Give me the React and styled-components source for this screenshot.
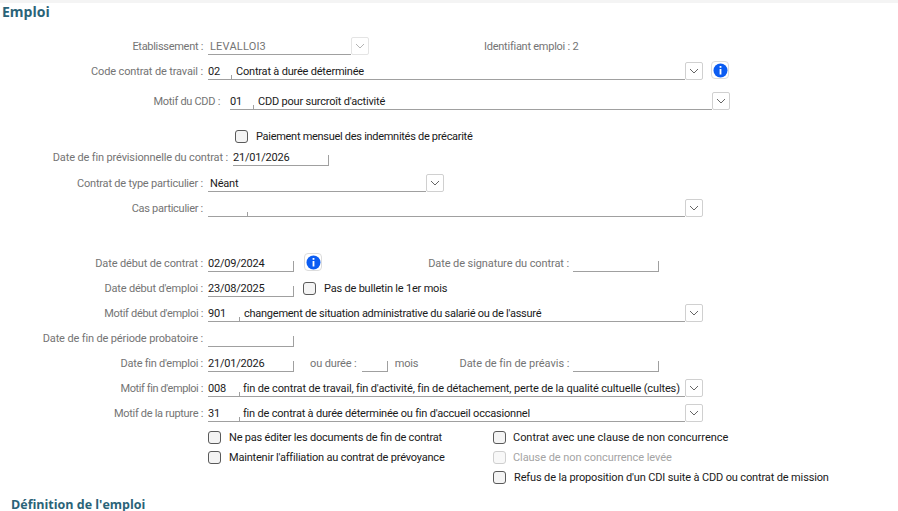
import styled, { createGlobalStyle } from 'styled-components'

const GlobalStyle = createGlobalStyle`
  html, body {
    margin: 0;
    padding: 0;
    background: #fff;
  }
`

const Page = styled.div`
  width: 898px;
  height: 511px;
  overflow: hidden;
  box-sizing: border-box;
  border-top: 3px solid #f4f4f4;
  font-family: Roboto, 'Liberation Sans', sans-serif;
  font-size: 11px;
  letter-spacing: -0.2px;
  color: #1a1a1a;
`

const SectionTitle = styled.h2`
  margin: ${(props) => props.$top || 0}px 0 0 ${(props) => props.$left || 0}px;
  height: 18px;
  line-height: 18px;
  font-family: 'Open Sans', sans-serif;
  font-size: ${(props) => props.$size}px;
  font-weight: 700;
  letter-spacing: 0;
  color: #2a6378;
`

const Row = styled.div`
  display: flex;
  align-items: flex-end;
  height: 18px;
  margin-top: ${(props) => props.$top || 0}px;
`

const Label = styled.label`
  flex: none;
  width: ${(props) => props.$w || 203}px;
  margin-right: ${(props) => props.$gap ?? 5}px;
  height: 18px;
  line-height: 20px;
  text-align: right;
  white-space: nowrap;
  letter-spacing: ${(props) => props.$ls ?? -0.14}px;
  color: #747474;
`

const Field = styled.div`
  display: flex;
  align-items: flex-end;
  flex: none;
  box-sizing: border-box;
  width: ${(props) => props.$w}px;
  height: 18px;
  margin-left: ${(props) => props.$left || 0}px;
  border-bottom: 1px solid #a0a0a0;
`

const Code = styled.span`
  flex: none;
  width: ${(props) => props.$w}px;
  height: 17px;
  line-height: 19px;
  white-space: nowrap;
`

const Value = styled.span`
  flex: 1;
  height: 17px;
  line-height: 19px;
  padding-left: ${(props) => props.$pad ?? 4}px;
  white-space: nowrap;
  letter-spacing: ${(props) => props.$ls ?? -0.2}px;
  color: ${(props) => (props.$muted ? '#747474' : '#1a1a1a')};
`

const Tick = styled.i`
  flex: none;
  width: 1px;
  height: ${(props) => props.$h || 4}px;
  background: #a0a0a0;
`

const DropButton = styled.button`
  flex: none;
  box-sizing: border-box;
  display: flex;
  align-items: center;
  justify-content: center;
  width: 18px;
  height: 18px;
  padding: 0;
  background: #fff;
  border: 1px solid ${(props) => (props.disabled ? '#e4e4e4' : '#d0d0d0')};
  border-radius: 2px;
  color: ${(props) => (props.disabled ? '#b4b4b4' : '#666')};
`

const InfoButton = styled.button`
  flex: none;
  box-sizing: border-box;
  display: flex;
  align-items: center;
  justify-content: center;
  width: 18px;
  height: 18px;
  margin-left: ${(props) => props.$left}px;
  margin-bottom: 1px;
  padding: 0;
  background: #fff;
  border: 1px solid #dcdcdc;
  border-radius: 4px;
`

const Text = styled.span`
  flex: none;
  height: 18px;
  line-height: 20px;
  margin-left: ${(props) => props.$left || 0}px;
  white-space: nowrap;
  letter-spacing: ${(props) => props.$ls ?? -0.14}px;
  color: #747474;
`

const CheckLine = styled.div`
  display: flex;
  align-items: center;
  gap: ${(props) => props.$gap || 8}px;
  height: ${(props) => props.$h || 20}px;
  margin-left: ${(props) => props.$left || 0}px;
  margin-top: ${(props) => props.$top || 0}px;
  white-space: nowrap;
  letter-spacing: ${(props) => props.$ls ?? -0.2}px;
  color: ${(props) => (props.$disabled ? '#a4a4a4' : '#1a1a1a')};
`

const Box = styled.span`
  flex: none;
  box-sizing: border-box;
  width: 13px;
  height: 13px;
  background: ${(props) => (props.$disabled ? '#f8f8f8' : '#f4f4f4')};
  border: 1px solid ${(props) => (props.$disabled ? '#cfcfcf' : '#5a5a5a')};
  border-radius: 3px;
`

const CheckGrid = styled.div`
  display: grid;
  grid-template-columns: 285px auto;
  margin: 5px 0 0 208px;
`

const CheckColumn = styled.div`
  display: flex;
  flex-direction: column;
`

const Chevron = () => (
  <svg width="10" height="6" viewBox="0 0 10 6">
    <polyline points="1,1 5,5 9,1" fill="none" stroke="currentColor" strokeWidth="1" />
  </svg>
)

const InfoIcon = () => (
  <svg width="15" height="15" viewBox="0 0 15 15">
    <circle cx="7.5" cy="7.5" r="7" fill="#0b5cf2" />
    <rect x="6.6" y="3" width="1.8" height="1.8" fill="#fff" />
    <rect x="6.6" y="6" width="1.8" height="5.5" fill="#fff" />
  </svg>
)

const Combo = ({ w, code, codeW, value, pad, ls }) => (
  <>
    <Field $w={w}>
      {codeW && <Code $w={codeW}>{code}</Code>}
      {codeW && <Tick />}
      <Value $pad={pad} $ls={ls}>
        {value}
      </Value>
    </Field>
    <DropButton>
      <Chevron />
    </DropButton>
  </>
)

const DateField = ({ w = 86, value, left }) => (
  <Field $w={w} $left={left}>
    <Code $w={w - 1}>{value}</Code>
    <Tick $h={10} />
  </Field>
)

const Check = ({ children, disabled, ...rest }) => (
  <CheckLine $disabled={disabled} {...rest}>
    <Box $disabled={disabled} />
    {children}
  </CheckLine>
)

export default function App() {
  return (
    <Page>
      <GlobalStyle />
      <SectionTitle $left={2} $size={14}>
        Emploi
      </SectionTitle>

      <Row $top={16}>
        <Label $ls={-0.3}>Etablissement :</Label>
        <Field $w={143}>
          <Value $pad={2} $muted $ls={0.2}>
            LEVALLOI3
          </Value>
        </Field>
        <DropButton disabled>
          <Chevron />
        </DropButton>
        <Text $left={115} $ls={-0.25}>
          Identifiant emploi : 2
        </Text>
      </Row>

      <Row $top={7}>
        <Label>Code contrat de travail :</Label>
        <Combo w={477} code="02" codeW={23} value="Contrat à durée déterminée" />
        <InfoButton $left={8}>
          <InfoIcon />
        </InfoButton>
      </Row>

      <Row $top={12}>
        <Label $w={220} $gap={10} $ls={-0.3}>
          Motif du CDD :
        </Label>
        <Combo w={482} code="01" codeW={23} value="CDD pour surcroît d'activité" />
      </Row>

      <Check $left={235} $h={14} $top={19} $ls={-0.29}>
        Paiement mensuel des indemnités de précarité
      </Check>

      <Row $top={5}>
        <Label $w={228} $gap={5}>
          Date de fin prévisionnelle du contrat :
        </Label>
        <DateField w={96} value="21/01/2026" />
      </Row>

      <Row $top={8}>
        <Label $ls={-0.2}>Contrat de type particulier :</Label>
        <Combo w={218} value="Néant" pad={2} />
      </Row>

      <Row $top={7}>
        <Label $ls={-0.28}>Cas particulier :</Label>
        <Combo w={477} code="" codeW={39} value="" />
      </Row>

      <Row $top={37}>
        <Label>Date début de contrat :</Label>
        <DateField value="02/09/2024" />
        <InfoButton $left={10}>
          <InfoIcon />
        </InfoButton>
        <Label $w={247} $gap={4} $ls={-0.1}>
          Date de signature du contrat :
        </Label>
        <DateField value="" />
      </Row>

      <Row $top={7}>
        <Label $ls={-0.19}>Date début d'emploi :</Label>
        <DateField value="23/08/2025" />
        <Check $left={9} $h={18}>
          Pas de bulletin le 1er mois
        </Check>
      </Row>

      <Row $top={7}>
        <Label $ls={-0.32}>Motif début d'emploi :</Label>
        <Combo
          w={477}
          code="901"
          codeW={31}
          ls={-0.25}
          value="changement de situation administrative du salarié ou de l'assuré"
        />
      </Row>

      <Row $top={7}>
        <Label>Date de fin de période probatoire :</Label>
        <DateField value="" />
      </Row>

      <Row $top={7}>
        <Label $ls={-0.25}>Date fin d'emploi :</Label>
        <DateField value="21/01/2026" />
        <Text $left={16}>ou durée :</Text>
        <DateField w={26} value="" left={5} />
        <Text $left={7}>mois</Text>
        <Label $w={151} $gap={4} $ls={-0.04}>
          Date de fin de préavis :
        </Label>
        <DateField value="" />
      </Row>

      <Row $top={7}>
        <Label $ls={-0.4}>Motif fin d'emploi :</Label>
        <Combo
          w={477}
          code="008"
          codeW={31}
          pad={3}
          ls={-0.14}
          value="fin de contrat de travail, fin d'activité, fin de détachement, perte de la qualité cultuelle (cultes)"
        />
      </Row>

      <Row $top={7}>
        <Label $ls={-0.3}>Motif de la rupture :</Label>
        <Combo
          w={477}
          code="31"
          codeW={31}
          pad={3}
          value="fin de contrat à durée déterminée ou fin d'accueil occasionnel"
        />
      </Row>

      <CheckGrid>
        <CheckColumn>
          <Check>Ne pas éditer les documents de fin de contrat</Check>
          <Check>Maintenir l'affiliation au contrat de prévoyance</Check>
        </CheckColumn>
        <CheckColumn>
          <Check $gap={7} $ls={-0.03}>
            Contrat avec une clause de non concurrence
          </Check>
          <Check $gap={7} $ls={-0.07} disabled>
            Clause de non concurrence levée
          </Check>
          <Check $ls={-0.14}>Refus de la proposition d'un CDI suite à CDD ou contrat de mission</Check>
        </CheckColumn>
      </CheckGrid>

      <SectionTitle $left={11} $top={9} $size={12.5}>
        Définition de l'emploi
      </SectionTitle>
    </Page>
  )
}
